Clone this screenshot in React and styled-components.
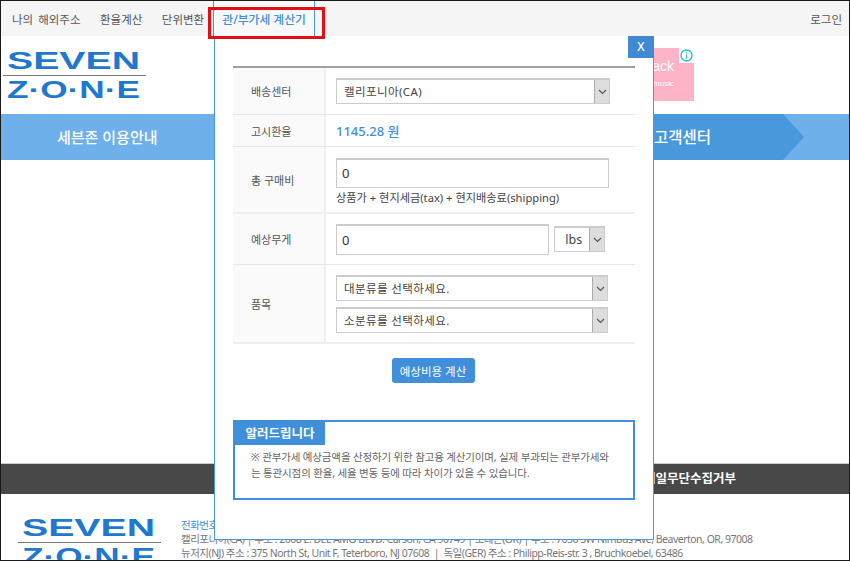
import React from 'react'
import styled, { createGlobalStyle } from 'styled-components'

const GlobalStyle = createGlobalStyle`
  html, body {
    margin: 0;
    padding: 0;
    background: #fff;
  }
  * {
    box-sizing: border-box;
  }
`

const FONT = `"Noto Sans", "Noto Sans CJK KR", sans-serif`

const Frame = styled.div`
  position: relative;
  width: 850px;
  height: 561px;
  overflow: hidden;
  border: 1px solid #1a1a1a;
  background: #fff;
  font-family: ${FONT};
  color: #555;
`

// Top nav
const TopNav = styled.nav`
  display: flex;
  align-items: center;
  height: 35px;
  padding: 0 7px 0 11px;
  background: #f5f5f5;
  font-size: 11.5px;
  word-spacing: 2px;
  color: #555;
`

const NavItem = styled.span`
  margin-right: 19.5px;
  white-space: nowrap;
`

const ActiveTab = styled.span`
  display: flex;
  align-items: center;
  justify-content: center;
  width: 102px;
  height: 35px;
  margin-left: -10.5px;
  border-left: 1px solid #4a98dc;
  border-right: 1px solid #4a98dc;
  background: #f8f8f8;
  color: #3f8fdb;
  font-size: 11.8px;
  font-weight: 500;
  word-spacing: 0;
  white-space: nowrap;
`

const LoginLink = styled.span`
  margin-left: auto;
`

// Red highlight drawn over the screenshot
const Highlight = styled.div`
  position: absolute;
  left: 207px;
  top: 6px;
  width: 117px;
  height: 32px;
  border: 3px solid #e30f17;
  z-index: 5;
`

// Header
const Header = styled.header`
  display: flex;
  height: 78px;
  padding: 13px 0 0 2px;
`

const LogoSvg = styled.svg`
  display: block;
  flex: none;
`

const AdBox = styled.div`
  position: relative;
  flex: none;
  width: 100px;
  height: 53px;
  margin: -1px 0 0 448px;
  padding: 10px 20px 0 0;
  background: #ffb3c7;
  color: #fff;
  text-align: right;
  font-family: "Liberation Sans", sans-serif;
`

const AdTitle = styled.div`
  font-size: 14px;
  line-height: 16px;
`

const AdSub = styled.div`
  margin-top: 5px;
  font-size: 8px;
  line-height: 10px;
`

const AdInfo = styled.svg`
  position: absolute;
  top: 0;
  right: 0;
  background: #fff;
`

// Blue menu bar
const MenuBar = styled.div`
  display: flex;
  height: 46px;
  background: #6db0ea;
`

const MenuFirst = styled.div`
  flex: none;
  width: 214px;
  padding-left: 56px;
  line-height: 46px;
  color: #fff;
  font-size: 15px;
  font-weight: 500;
`

const MenuDark = styled.div`
  flex: none;
  width: 589px;
  padding-left: 439px;
  line-height: 46px;
  background: #4a98dc;
  color: #fff;
  font-size: 15.5px;
  font-weight: 500;
  clip-path: polygon(0 0, 568px 0, 589px 50%, 568px 100%, 0 100%);
`

const PageBody = styled.div`
  height: 303px;
`

const DarkBar = styled.div`
  height: 31px;
  padding-right: 113px;
  border-top: 1px solid #ccc;
  background: #484848;
  color: #fff;
  font-size: 12.5px;
  font-weight: 600;
  line-height: 30px;
  text-align: right;
`

// Footer
const Footer = styled.footer`
  display: flex;
  gap: 20px;
  padding: 22px 0 0 17px;
`

const FooterText = styled.div`
  margin-top: 2px;
  font-size: 10.5px;
  line-height: 14px;
  letter-spacing: -0.5px;
  color: #777;
  white-space: nowrap;
`

const FooterPhone = styled.div`
  color: #3f8fdb;
`

// Modal
const Modal = styled.div`
  position: absolute;
  left: 213px;
  top: 35px;
  width: 440px;
  height: 504px;
  padding: 30px 17px 0 18px;
  background: #fff;
  border: 1px solid #4a98dc;
  border-top: none;
  z-index: 3;
`

const CloseButton = styled.button`
  position: absolute;
  top: 0;
  right: -1px;
  width: 26px;
  height: 22px;
  padding: 0;
  border: none;
  background: #3f8ad2;
  color: #fff;
  font-family: ${FONT};
  font-size: 12px;
  font-weight: 500;
  line-height: 22px;
`

const FormTable = styled.div`
  width: 402px;
  border-top: 2px solid #a0a0a0;
`

const Row = styled.div`
  display: grid;
  grid-template-columns: 93px 1fr;
  height: ${({ $h }) => $h}px;
  border-bottom: ${({ $thick }) => ($thick ? '2px solid #eee' : '1px solid #e6e6e6')};
`

const Label = styled.div`
  display: flex;
  align-items: center;
  padding-left: 18px;
  border-right: 2px solid #f0f0f0;
  background: #fafafa;
  font-size: 11px;
  color: #555;
`

const Cell = styled.div`
  display: flex;
  flex-direction: ${({ $col }) => ($col ? 'column' : 'row')};
  align-items: ${({ $col }) => ($col ? 'flex-start' : 'center')};
  justify-content: ${({ $col }) => ($col ? 'center' : 'flex-start')};
  gap: ${({ $gap }) => $gap || 0}px;
  padding: ${({ $pt }) => $pt || 0}px 0 0 10px;
`

const SelectBox = styled.div`
  display: flex;
  align-items: stretch;
  width: ${({ $w }) => $w}px;
  height: 26px;
  border: 1px solid #ccc;
  border-top-width: 2px;
  background: #fff;
  font-size: 11.5px;
  color: #444;
`

const SelectText = styled.span`
  flex: 1;
  padding-left: 7px;
  line-height: 23px;
  white-space: nowrap;
  letter-spacing: ${({ $wide }) => ($wide ? '0.4px' : '0')};
`

const SelectArrow = styled.span`
  display: flex;
  flex: none;
  align-items: center;
  justify-content: center;
  width: 15px;
  background: #ddd;
  border-left: 1px solid #aaa;
`

const TextInput = styled.div`
  width: ${({ $w }) => $w}px;
  height: ${({ $h }) => $h}px;
  padding-left: 5px;
  border: 1px solid #ccc;
  border-top-width: 2px;
  background: #fff;
  color: #333;
  font-size: 13px;
  line-height: ${({ $h }) => $h - 3}px;
`

const HelpText = styled.div`
  margin-top: 2px;
  font-size: 11.2px;
  line-height: 16px;
  color: #444;
`

const RateValue = styled.span`
  color: #3f8fdb;
  font-size: 13px;
  font-weight: 500;
`

const UnitSelect = styled(SelectBox)`
  font-size: 12.5px;
`

const ActionRow = styled.div`
  display: flex;
  justify-content: center;
  margin-top: 14px;
  padding-right: 3px;
`

const CalcButton = styled.button`
  width: 83px;
  height: 25px;
  padding: 0;
  border: none;
  border-radius: 3px;
  background: #3f8fdb;
  color: #fff;
  font-family: ${FONT};
  font-size: 11.5px;
`

const Notice = styled.section`
  width: 402px;
  height: 80px;
  margin-top: 37px;
  border: 2px solid #3f8fdb;
`

const NoticeTitle = styled.h4`
  width: 90px;
  height: 23px;
  margin: 0;
  background: #3f8fdb;
  color: #fff;
  font-size: 12.5px;
  font-weight: 600;
  line-height: 23px;
  text-align: center;
`

const NoticeText = styled.p`
  margin: 4px 0 0;
  padding: 0 16px;
  font-size: 10.5px;
  line-height: 16px;
  letter-spacing: -0.15px;
  color: #666;
`

function Chevron() {
  return (
    <svg width="9" height="6" viewBox="0 0 9 6">
      <path d="M1 1l3.5 3.5L8 1" fill="none" stroke="#555" strokeWidth="1.2" />
    </svg>
  )
}

function Select({ w, children, wide }) {
  return (
    <SelectBox $w={w}>
      <SelectText $wide={wide}>{children}</SelectText>
      <SelectArrow>
        <Chevron />
      </SelectArrow>
    </SelectBox>
  )
}

function Logo() {
  return (
    <LogoSvg width="143" height="56" viewBox="0 0 143 56">
      <text
        x="4"
        y="20"
        textLength="133"
        lengthAdjust="spacingAndGlyphs"
        fontFamily="Liberation Sans, sans-serif"
        fontWeight="700"
        fontSize="24"
        fill="#1f78cf"
      >
        SEVEN
      </text>
      <line x1="0" y1="26.5" x2="143" y2="26.5" stroke="#777" strokeWidth="1" />
      <text
        x="4"
        y="49"
        textLength="133"
        lengthAdjust="spacingAndGlyphs"
        fontFamily="Liberation Sans, sans-serif"
        fontWeight="700"
        fontSize="24"
        fill="#1f78cf"
      >
        Z·O·N·E
      </text>
    </LogoSvg>
  )
}

export default function App() {
  return (
    <Frame>
      <GlobalStyle />
      <TopNav>
        <NavItem>나의 해외주소</NavItem>
        <NavItem>환율계산</NavItem>
        <NavItem>단위변환</NavItem>
        <ActiveTab>관/부가세 계산기</ActiveTab>
        <LoginLink>로그인</LoginLink>
      </TopNav>
      <Highlight />

      <Header>
        <Logo />
        <AdBox>
          <AdTitle>Back</AdTitle>
          <AdSub>music</AdSub>
          <AdInfo width="15" height="15" viewBox="0 0 15 15">
            <circle cx="7.5" cy="7.5" r="5.5" fill="none" stroke="#2cc3c9" strokeWidth="1.4" />
            <rect x="6.9" y="6.5" width="1.3" height="4" fill="#2cc3c9" />
            <rect x="6.9" y="4.2" width="1.3" height="1.4" fill="#2cc3c9" />
          </AdInfo>
        </AdBox>
      </Header>

      <MenuBar>
        <MenuFirst>세븐존 이용안내</MenuFirst>
        <MenuDark>고객센터</MenuDark>
      </MenuBar>

      <PageBody />

      <DarkBar>이메일무단수집거부</DarkBar>

      <Footer>
        <Logo />
        <FooterText>
          <FooterPhone>전화번호 : 1588-0000</FooterPhone>
          <div>캘리포니아(CA) | 주소 : 2668 E. DEL AMO BLVD. Carson, CA 90749 | 오레곤(OR) | 주소 : 7650 SW Nimbus Ave, Beaverton, OR, 97008</div>
          <div>뉴저지(NJ) 주소 : 375 North St, Unit F, Teterboro, NJ 07608 &nbsp;|&nbsp; 독일(GER) 주소 : Philipp-Reis-str. 3 , Bruchkoebel, 63486</div>
        </FooterText>
      </Footer>

      <Modal>
        <CloseButton>X</CloseButton>
        <FormTable>
          <Row $h={47}>
            <Label>배송센터</Label>
            <Cell>
              <Select w={274} wide>캘리포니아(CA)</Select>
            </Cell>
          </Row>
          <Row $h={32}>
            <Label>고시환율</Label>
            <Cell>
              <RateValue>1145.28 원</RateValue>
            </Cell>
          </Row>
          <Row $h={67} $thick>
            <Label>총 구매비</Label>
            <Cell $col $pt={4}>
              <TextInput $w={273} $h={30}>0</TextInput>
              <HelpText>상품가 + 현지세금(tax) + 현지배송료(shipping)</HelpText>
            </Cell>
          </Row>
          <Row $h={51}>
            <Label>예상무게</Label>
            <Cell $gap={5}>
              <TextInput $w={213} $h={31}>0</TextInput>
              <UnitSelect $w={51}>
                <SelectText>&nbsp;lbs</SelectText>
                <SelectArrow>
                  <Chevron />
                </SelectArrow>
              </UnitSelect>
            </Cell>
          </Row>
          <Row $h={79} $thick>
            <Label>품목</Label>
            <Cell $col $gap={6} $pt={1}>
              <Select w={272} wide>대분류를 선택하세요.</Select>
              <Select w={272} wide>소분류를 선택하세요.</Select>
            </Cell>
          </Row>
        </FormTable>
        <ActionRow>
          <CalcButton>예상비용 계산</CalcButton>
        </ActionRow>
        <Notice>
          <NoticeTitle>알러드립니다</NoticeTitle>
          <NoticeText>
            ※ 관부가세 예상금액을 산정하기 위한 참고용 계산기이며, 실제 부과되는 관부가세와는 통관시점의 환율, 세율 변동 등에 따라 차이가 있을 수 있습니다.
          </NoticeText>
        </Notice>
      </Modal>
    </Frame>
  )
}
